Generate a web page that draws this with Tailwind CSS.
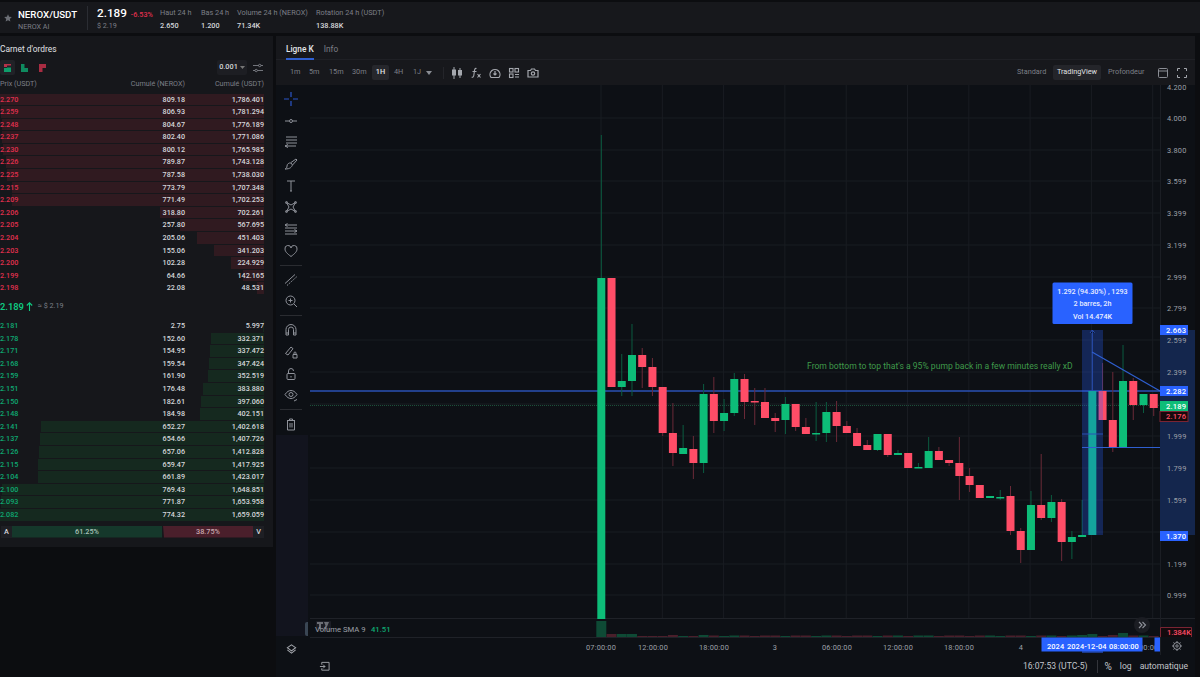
<!DOCTYPE html>
<html lang="fr">
<head>
    <meta charset="UTF-8">
    <title>NEROX/USDT</title>
    <script src="https://cdn.jsdelivr.net/npm/@tailwindcss/browser@4"></script>
</head>
<body class="bg-[#0c0d10] font-['Roboto',sans-serif] text-[#d5d7db] w-[1200px] h-[677px] overflow-hidden">

    <!-- en-tete -->
    <header class="mt-[2px] h-[31px] bg-[#17181c] flex items-center">
        <svg class="ml-[4px] w-[8px] h-[8px] mt-[1px]" viewBox="0 0 24 24" fill="#6b6e75"><path d="M12 1l3.4 7.4 8 .9-6 5.4 1.700 8L12 18.700l-7.100 4 1.700-8-6-5.400 8-.9z"/></svg>
        <div class="ml-[6px] w-[69px] mt-[4px]">
            <div class="text-[9.700px] leading-[13px] font-medium text-white">NEROX/USDT</div>
            <div class="text-[7.200px] leading-[11px] text-[#7c7f87]">NEROX AI</div>
        </div>
        <div class="w-px h-[24px] bg-[#2b2d33]"></div>
        <div class="ml-[9px] w-[63px] mt-[1.500px]">
            <div class="flex items-baseline gap-[4px]">
                <span class="text-[11.700px] leading-[15px] font-medium text-white">2.189</span>
                <span class="text-[7.200px] font-medium text-[#e0304e]">-6.53%</span>
            </div>
            <div class="text-[7.200px] leading-[10px] text-[#7c7f87]">$ 2.19</div>
        </div>
        <div class="w-[41px] mt-[2px]"><div class="text-[7.300px] leading-[13px] text-[#7c7f87]">Haut 24 h</div><div class="text-[7.300px] leading-[13px] font-medium text-[#d5d7db]">2.650</div></div>
        <div class="w-[36px] mt-[2px]"><div class="text-[7.300px] leading-[13px] text-[#7c7f87]">Bas 24 h</div><div class="text-[7.300px] leading-[13px] font-medium text-[#d5d7db]">1.200</div></div>
        <div class="w-[79px] mt-[2px]"><div class="text-[7.300px] leading-[13px] text-[#7c7f87]">Volume 24 h (NEROX)</div><div class="text-[7.300px] leading-[13px] font-medium text-[#d5d7db]">71.34K</div></div>
        <div class="mt-[2px]"><div class="text-[7.300px] leading-[13px] text-[#7c7f87]">Rotation 24 h (USDT)</div><div class="text-[7.300px] leading-[13px] font-medium text-[#d5d7db]">138.88K</div></div>
    </header>

    <div class="mt-[3px] flex h-[641px]">
        <!-- carnet d'ordres -->
        <aside class="w-[273px] h-[511px] bg-[#16171b] shrink-0">
            <div class="h-[24px] pt-[7px] text-[8.400px] leading-[13px] text-[#e0e2e5]">Carnet d'ordres</div>
            <div class="h-[15px] flex items-center">
                <div class="w-[15px] h-[15px] rounded-[2px] bg-[#212227] flex items-center justify-center">
                    <svg class="w-[7px] h-[8px]" viewBox="0 0 7 8"><path fill="#b8324a" d="M0 0h7v1.500H3v1.500H0z"/><path fill="#0f9d6b" d="M0 4h3v-.500h4V8H0z"/></svg>
                </div>
                <svg class="ml-[6px] w-[7px] h-[8px]" viewBox="0 0 7 8"><path fill="#0f8a5f" d="M0 0h3.500v4H7v4H0z"/></svg>
                <svg class="ml-[11px] w-[7px] h-[8px]" viewBox="0 0 7 8"><path fill="#a82c42" d="M0 0h7v4H3.500v4H0z"/></svg>
                <div class="ml-[171px] w-[30px] h-[15px] rounded-[2px] bg-[#1d1e23] flex items-center justify-center gap-[2px] text-[7.300px] font-medium text-[#d5d7db]">0.001<svg class="w-[5px] h-[3px]" viewBox="0 0 5 3" fill="#777"><path d="M0 0h5L2.500 3z"/></svg></div>
                <svg class="ml-[6px] w-[10px] h-[10px]" viewBox="0 0 10 10" fill="none" stroke="#8a8d94" stroke-width=".8"><path d="M0 2.500h5.500M8 2.500h2M0 7.500h2M4.500 7.500H10"/><circle cx="6.700" cy="2.500" r="1.200"/><circle cx="3.200" cy="7.500" r="1.200"/></svg>
            </div>
            <div class="h-[18.500px] w-[264px] grid grid-cols-[1fr_53px_79px] items-center text-[7.200px] text-[#7c7f87]">
                <span>Prix (USDT)</span>
                <span class="text-right whitespace-nowrap justify-self-end">Cumulé (NEROX)</span>
                <span class="text-right">Cumulé (USDT)</span>
            </div>
            <div id="asks" class="w-[264px]"></div>
            <div class="h-[25px] pb-[2px] flex items-center">
                <span class="text-[9.300px] font-semibold text-[#0ecb81]">2.189</span>
                <svg class="ml-[2px] w-[7px] h-[9px]" viewBox="0 0 7 9" fill="none" stroke="#0ecb81" stroke-width="1.100"><path d="M3.500 9V1M.8 3.500L3.500 .8l2.700 2.700"/></svg>
                <span class="ml-[5px] text-[7.200px] text-[#7c7f87]">≈ $ 2.19</span>
            </div>
            <div id="bids" class="w-[264px]"></div>
            <!-- barre A / V -->
            <div class="w-[264px] mt-[4px] pl-[1px] h-[12px] flex items-stretch text-[7.300px] leading-[12px] text-center font-medium">
                <div class="w-[11px] bg-[#1e1f24] text-[#d5d7db]">A</div>
                <div class="w-[150px] bg-[#15382b] text-[#a9c3b8] [clip-path:polygon(0_0,100%_0,101%_100%,0_100%)]">61.25%</div>
                <div class="ml-[1px] flex-1 bg-[#4a1f2b] text-[#c7a7ae] [clip-path:polygon(0_0,100%_0,100%_100%,1px_100%)]">38.75%</div>
                <div class="w-[11px] bg-[#1e1f24] text-[#d5d7db]">V</div>
            </div>
        </aside>

        <!-- graphique -->
        <main class="ml-[3px] w-[919px] h-[641px] flex flex-col bg-[#0d1015]">
            <div class="h-[24px] bg-[#17181c] flex items-start gap-[10px] pl-[10px] border-b border-[#1f2025]">
                <div class="h-[24px] pt-[7px] text-[8.300px] leading-[12px] font-medium text-[#e3e5e8] border-b-2 border-[#2f5fd0]">Ligne K</div>
                <div class="pt-[7px] text-[8.300px] leading-[12px] text-[#7c7f87]">Info</div>
            </div>
            <div class="h-[25px] bg-[#17181c] flex items-center pl-[14px] text-[7.300px] text-[#7c7f87]">
                <span class="w-[19px]">1m</span><span class="w-[20px]">5m</span><span class="w-[23px]">15m</span><span class="w-[20px]">30m</span>
                <span class="w-[17px] h-[15px] rounded-[2px] bg-[#26272c] text-[#e3e5e8] font-medium flex items-center justify-center">1H</span>
                <span class="ml-[5px] w-[19px]">4H</span><span class="w-[12px]">1J</span>
                <svg class="ml-[1px] w-[6px] h-[4px]" viewBox="0 0 6 4" fill="#8a8d94"><path d="M0 0h6L3 4z"/></svg>
                <div class="ml-[11px] w-px h-[12px] bg-[#24252a]"></div>
                <div class="ml-[7px] flex items-center gap-[7px]">
                    <svg class="w-[12px] h-[12px]" viewBox="0 0 12 12" fill="#a4a7ad"><path d="M2.500 0h1v2.500H5v6H3.500V12h-1V8.500H1v-6h1.500zM8.500 1h1v2H11v5.500H9.500V11h-1V8.500H7V3h1.500z"/></svg>
                    <svg class="w-[12px] h-[12px]" viewBox="0 0 12 12" fill="none" stroke="#a4a7ad" stroke-width="1.100"><path d="M6.500 1.500C4.500 1 4.500 3 4.300 5L3.700 9c-.2 1-1 1.500-2 1M2.500 4.500h4M7.500 7l3 3.500M10.500 7l-3 3.500"/></svg>
                    <svg class="w-[12px] h-[12px]" viewBox="0 0 12 12" fill="none" stroke="#a4a7ad" stroke-width="1.200"><path d="M2 10.500A5 5 0 1 1 10 10.500z"/><path d="M6 4v3.500M4.500 6.500L6 8l1.500-1.500"/></svg>
                    <svg class="w-[12px] h-[12px]" viewBox="0 0 12 12" fill="none" stroke="#a4a7ad" stroke-width="1.100"><rect x="1.500" y="1.500" width="3.500" height="3.500"/><rect x="1.500" y="7" width="3.500" height="3.500"/><rect x="7" y="1.500" width="3.500" height="3.500"/><path d="M7 7.500h4M7 10h4"/></svg>
                    <svg class="w-[12px] h-[12px]" viewBox="0 0 12 12" fill="none" stroke="#a4a7ad" stroke-width="1.200"><path d="M1 3.500h2.500L4.500 2h3l1 1.500H11V10H1z"/><circle cx="6" cy="6.500" r="1.700"/></svg>
                </div>
                <div class="ml-auto flex items-center">
                    <span class="w-[36px]">Standard</span>
                    <span class="w-[48px] h-[15px] rounded-[2px] bg-[#24252a] text-[#e0e2e5] flex items-center justify-center">TradingView</span>
                    <span class="ml-[7px] w-[47px]">Profondeur</span>
                    <svg class="ml-[3px] w-[10px] h-[10px]" viewBox="0 0 10 10" fill="none" stroke="#8a8d94"><rect x=".5" y=".5" width="9" height="9" rx="1"/><path d="M.5 3h9"/></svg>
                    <svg class="ml-[9px] mr-[8px] w-[10px] h-[10px]" viewBox="0 0 10 10" fill="none" stroke="#a4a7ad"><path d="M.5 3V.5H3M7 .5h2.500V3M9.500 7v2.500H7M3 9.500H.5V7"/></svg>
                </div>
            </div>
            <div class="flex h-[570px]">
                <!-- outils de dessin -->
                <div class="w-[30px] shrink-0 flex flex-col">
                    <div id="tools" class="pt-[3px] flex flex-col items-center h-[353px]"></div>
                    <div class="w-[32px] h-[202px] bg-[#12141e] relative z-10">
                        <div class="absolute right-0 bottom-0 w-[3px] h-[14px] rounded-l-[2px] bg-[#3a4654]"></div>
                    </div>
                    <div class="flex justify-center pt-[8px]">
                        <svg class="w-[11px] h-[11px]" viewBox="0 0 12 12" fill="none" stroke="#a4a7ad" stroke-width="1.100"><path d="M6 1l4.500 3L6 7.500 1.500 4z"/><path d="M1.500 6.500L6 10l4.500-3.500"/></svg>
                    </div>
                </div>
                <svg id="chart" class="w-[889px] h-[570px]" viewBox="306 85 889 570"></svg>
            </div>
            <div class="h-[22px] flex items-center text-[8.600px] text-[#c2c5cb]">
                <svg class="ml-[43px] w-[11px] h-[11px]" viewBox="0 0 12 12" fill="none" stroke="#a4a7ad"><path d="M3 4V1.500h8V10H3V8M1 6h5.500M4.500 4l2 2-2 2"/></svg>
                <span class="ml-auto">16:07:53 (UTC-5)</span>
                <div class="ml-[9px] w-px h-[13px] bg-[#33353b]"></div>
                <span class="ml-[7px] text-[10px]">%</span>
                <span class="ml-[8px]">log</span>
                <span class="ml-[8px] mr-[7px]">automatique</span>
            </div>
        </main>
    </div>

    <script>
        // --- carnet d'ordres ---
        const ASKS = [
            ['2.270','809.18','1,786.401'],['2.259','806.93','1,781.294'],['2.248','804.67','1,776.189'],['2.237','802.40','1,771.086'],
            ['2.230','800.12','1,765.985'],['2.226','789.87','1,743.128'],['2.225','787.58','1,738.030'],['2.215','773.79','1,707.348'],
            ['2.209','771.49','1,702.253'],['2.206','318.80','702.261'],['2.205','257.80','567.695'],['2.204','205.06','451.403'],
            ['2.203','155.06','341.203'],['2.200','102.28','224.929'],['2.199','64.66','142.165'],['2.198','22.08','48.531']
        ];
        const BIDS = [
            ['2.181','2.75','5.997'],['2.178','152.60','332.371'],['2.171','154.95','337.472'],['2.168','159.54','347.424'],
            ['2.159','161.90','352.519'],['2.151','176.48','383.880'],['2.150','182.61','397.060'],['2.148','184.98','402.151'],
            ['2.141','652.27','1,402.618'],['2.137','654.66','1,407.726'],['2.126','657.06','1,412.828'],['2.115','659.47','1,417.925'],
            ['2.104','661.89','1,423.017'],['2.100','769.43','1,648.851'],['2.093','771.87','1,653.958'],['2.082','774.32','1,659.059']
        ];

        function renderBook(el, rows, max, barClass, textClass) {
            el.innerHTML = rows.map(r => {
                const pct = parseFloat(r[2].replace(',', '')) / max * 100;
                return `<div class="relative h-[12.600px] text-[7.200px] leading-[12px] font-medium flex text-[#d5d7db]">
                    <div class="absolute right-0 top-0 h-[11.600px] ${barClass}" style="width:${pct}%"></div>
                    <span class="relative w-[132px] ${textClass}">${r[0]}</span>
                    <span class="relative w-[53px] text-right">${r[1]}</span>
                    <span class="relative w-[79px] text-right">${r[2]}</span>
                </div>`;
            }).join('');
        }
        renderBook(document.getElementById('asks'), ASKS, 1786.401, 'bg-[#301a20]', 'text-[#e0304e]');
        renderBook(document.getElementById('bids'), BIDS, 1659.059, 'bg-[#15291f]', 'text-[#0fa872]');

        // --- outils de dessin ---
        const TOOL = 'fill="none" stroke="#8f929a" stroke-width="1"';
        const TOOLS = [
            `<path fill="none" stroke="#2a55c8" stroke-width="1.200" d="M7 0v5M7 9v5M0 7h5M9 7h5"/>`,
            `<g ${TOOL}><path d="M1 7h4M9 7h4"/><circle cx="7" cy="7" r="1.500"/></g>`,
            `<g ${TOOL}><path d="M2 2h11M2 5h11M2 8h11M1 11h11M4 9.500L1 11l3 1.500"/></g>`,
            `<g ${TOOL}><path d="M1 12c1-.5 2-1 2-3s2-3.500 4-3l1.500 2c-1 2-2 4-7.500 4zM7 5.500L12 2l1 1-4.500 5"/></g>`,
            `<g ${TOOL}><path d="M3 2h8M7 2v10M6 12h2"/></g>`,
            `<g ${TOOL}><path d="M2.500 2.500l2.500 4.500-2.500 4.500 4.500-2.500 4.500 2.500L9 7l2.500-4.500L7 5z"/><circle cx="2.500" cy="2.500" r="1"/><circle cx="11.500" cy="2.500" r="1"/><circle cx="2.500" cy="11.500" r="1"/><circle cx="11.500" cy="11.500" r="1"/></g>`,
            `<g ${TOOL}><path d="M1 3h12M1 6h12M1 9h12M1 12h12M3.500 1.500L1 3l2.500 1.500M10.500 7.500L13 9l-2.500 1.500"/></g>`,
            `<g ${TOOL}><path d="M7 12.500C3 9.500 1 7.500 1 5a3 3 0 0 1 6-1 3 3 0 0 1 6 1c0 2.500-2 4.500-6 7.500z"/></g>`,
            `sep`,
            `<g ${TOOL}><path d="M1 10.500L11 1.500"/><path stroke-dasharray="1.500 1" d="M3 12.500L13 3.500"/></g>`,
            `<g ${TOOL}><circle cx="6.500" cy="6.500" r="4.500"/><path d="M10 10l3 3M6.500 4.500v4M4.500 6.500h4"/></g>`,
            `sep`,
            `<g ${TOOL}><path d="M2 12V6.500a5 5 0 0 1 10 0V12H9.500V6.500a2.500 2.500 0 0 0-5 0V12zM2 10h2.500M9.500 10H12"/></g>`,
            `<g ${TOOL}><path d="M1.500 8.500L7 2l2 1.700L4 10zM9 9.500h4v3.500H9zM10 9.500V8a1 1 0 0 1 2 0v1.500"/></g>`,
            `<g ${TOOL}><rect x="3" y="6.500" width="8" height="6" rx="1"/><path d="M4.500 6.500V4a2.500 2.500 0 0 1 5 0M7 9v1.500"/></g>`,
            `<g ${TOOL}><path d="M1 6.500C3 3.500 5 2.500 7 2.500s4 1 6 4c-2 3-4 4-6 4s-4-1-6-4z"/><circle cx="7" cy="6.500" r="2"/><path d="M10 13l3-1.500"/></g>`,
            `sep`,
            `<g ${TOOL}><path d="M3 3.500h8M5.500 3.500V2h3v1.500M3.500 3.500V13h7V3.500M6 6v4.500M8 6v4.500"/></g>`
        ];
        document.getElementById('tools').innerHTML = TOOLS.map(t => t === 'sep'
            ? '<div class="w-[22px] h-[7.300px] shrink-0 flex items-center"><div class="w-full h-px bg-[#2a2c31]"></div></div>'
            : `<div class="h-[21.700px] flex items-center justify-center shrink-0"><svg class="w-[14px] h-[14px]" viewBox="0 0 14 14">${t}</svg></div>`
        ).join('');

        // --- bougies : couleur, haut corps, bas corps, haut meche, bas meche ---
        const C = [
            'g278 619 135 619','r278 387 278 387','g381 387 354 396','g355 381 324 396','r355 367 348 388','r367 387 358 396','r387 433 387 436','r433 453 403 466',
            'g448 454 425 454','r449 463 436 479','g394 463 384 473','r394 421 377 433','g413 421 399 431','g379 413 373 416','r379 402 374 419','r401 402 388 425',
            'r402 418 388 418','r418 421 413 432','g404 420 397 434','r404 427 404 431','r427 434 418 434','g433 434 402 441','g412 433 402 442','r412 426 401 442',
            'r426 433 421 433','r433 446 428 446','r445 450 440 450','g434 450 434 451','r434 455 434 457','g453 455 450 455','r453 468 453 468','g467 468 463 468',
            'g451 468 437 468','r451 460 447 460','r460 463 460 466','r463 476 437 500','r476 485 468 492','r485 498 485 498','g496 498 496 498','g497 498 490 500',
            'r496 531 486 535','r531 550 528 563','g505 550 491 550','r505 518 454 520','g502 518 495 522','r502 542 499 561','g537 542 531 559','g535 537 500 537',
            'g391 535 391 535','r391 420 363 420','r420 447 372 452','g381 447 345 447','r381 405 378 420','g394 405 394 413','r394 408 394 416'
        ];
        const VOL = {0:16, 1:3, 2:3, 3:3, 4:1, 5:1, 6:1, 7:2, 8:1, 9:1, 10:2, 47:2, 48:3, 51:4, 49:1, 50:2};
        const GREEN = '#0dbd78', RED = '#ff4d67';
        const FONT = 'font-family="Roboto, sans-serif"';
        const AXIS = `fill="#9da0a8" font-size="7.400" letter-spacing=".2" ${FONT}`;
        let s = '';

        // grille
        for (const y of [118,150,181,213,245,277,308,340,372,404,436,468,500,532,564,595]) s += `<path d="M310 ${y}H1160" stroke="#191c22"/>`;
        for (let x = 601; x < 1160; x += 61.3) s += `<path d="M${x} 85V618" stroke="#191c22"/>`;
        s += `<path d="M310 618.500H1195M310 637.500H1160" stroke="#1f2228"/><path d="M1160.500 85V655" stroke="#1b1e24"/>`;

        // lignes de prix
        s += `<path d="M310 405.500H1160" stroke="#1c4f3a" stroke-dasharray="1 1"/>`;
        s += `<path d="M310 391H1160" stroke="#2a50b5" stroke-width="1.600"/>`;

        // bougies
        C.forEach((c, i) => {
            const x = 601.3 + i * 10.23;
            const up = c[0] === 'g';
            const [t, b, wt, wb] = c.slice(1).split(' ').map(Number);
            s += `<path d="M${x} ${wt}V${wb}" stroke="${up ? '#0b5c40' : '#6b2a38'}"/>`;
            s += `<rect x="${x - 4}" y="${t}" width="8" height="${Math.max(b - t, 1.5)}" fill="${up ? GREEN : RED}"/>`;
            const h = VOL[i] || (i % 3 === 0 ? 1 : 1.5);
            s += `<rect x="${x - 5}" y="${637 - h}" width="10" height="${h}" fill="${up ? '#0e4a35' : '#4a1f2b'}"/>`;
        });

        // mesure de prix
        s += `<rect x="1082" y="330" width="21" height="205" fill="#2962ff" fill-opacity=".28"/>`;
        s += `<path d="M1092.300 330V391M1090 333l2.300-3 2.300 3M1082 434h21" stroke="#2a50b5"/>`;
        s += `<path d="M1082 447.500H1160" stroke="#2f5fd0"/><path d="M1092 352L1160 391" stroke="#2f5fd0" stroke-width="1.200"/>`;
        s += `<rect x="1160" y="330" width="35" height="205" fill="#14264d"/>`;
        s += `<rect x="1052.500" y="282.500" width="80" height="41.500" rx="1.500" fill="#2962ff"/>`;
        [['1.292 (94.30%) , 1293',293.500],['2 barres, 2h',306],['Vol 14.474K',318.500]].forEach(t => {
            s += `<text x="1092.500" y="${t[1]}" text-anchor="middle" fill="#e8edff" font-size="7.200" font-weight="500" ${FONT}>${t[0]}</text>`;
        });
        s += `<text x="807" y="369" fill="#3f9a4a" font-size="8.600" ${FONT}>From bottom to top that's a 95% pump back in a few minutes really xD</text>`;

        // echelle de prix
        for (const [p, y] of [['4.200',90],['4.000',121],['3.800',153],['3.599',184],['3.399',216],['3.199',248],['2.999',280],['2.799',311],['2.599',343],['2.399',375],['1.999',439],['1.799',471],['1.599',503],['1.199',567],['0.999',598]]) {
            s += `<text x="1167" y="${y}" ${AXIS}>${p}</text>`;
        }
        for (const [p, y, bg, fg, bd] of [['2.663',325,'#2962ff','#fff',''],['2.282',386,'#2962ff','#fff',''],['2.189',401,'#0dbd78','#fff',''],['2.176',411.5,'#16090c','#ff4d67','#7a2433'],['1.370',531,'#2962ff','#fff','']]) {
            s += `<rect x="1160" y="${y}" width="28" height="10" fill="${bg}" ${bd ? `stroke="${bd}"` : ''}/>`;
            s += `<text x="1166" y="${y + 7.800}" fill="${fg}" font-size="7.600" font-weight="500" letter-spacing=".2" ${FONT}>${p}</text>`;
        }
        s += `<path d="M1160.500 637V627.500H1191.500V637" fill="#140a0d" stroke="#7a2433"/><text x="1167" y="635" fill="#ff4d67" font-size="7.500" font-weight="500" ${FONT}>1.384K</text>`;

        // volume
        s += `<rect x="316" y="621" width="15" height="10" rx="1" fill="#1c1e26"/><path d="M317 622h6v2h-2v5h-2v-5h-2zM324 622h5l-3 7h-2l1.500-3.500" fill="#6b6e75"/>`;
        s += `<text x="315" y="632" fill="#9da0a8" font-size="7.700" ${FONT}>Volume SMA 9</text><text x="371" y="632" fill="#0fa872" font-size="7.700" font-weight="500" ${FONT}>41.51</text>`;
        s += `<circle cx="1142" cy="625" r="8" fill="#1b1d23"/><path d="M1139 622l3 3-3 3M1142.500 622l3 3-3 3" fill="none" stroke="#8f929a" stroke-width="1.100"/>`;

        // echelle de temps
        for (const [t, x] of [['07:00:00',601],['12:00:00',653],['18:00:00',714],['3',775],['06:00:00',837],['12:00:00',898],['18:00:00',959],['4',1021]]) {
            s += `<text x="${x}" y="650" text-anchor="middle" ${AXIS}>${t}</text>`;
        }
        s += `<text x="1139" y="650" ${AXIS}>00:00</text>`;
        s += `<rect x="1082" y="651" width="21" height="2" fill="#1d3a8a"/><rect x="1041.500" y="637.500" width="101" height="14" fill="#2962ff"/><rect x="1154.500" y="637.500" width="5.500" height="14" fill="#2962ff"/>`;
        [['2024',1047],['2024-12-04',1067],['08:00:00',1109]].forEach(t => {
            s += `<text x="${t[1]}" y="649" fill="#fff" font-size="7.400" font-weight="500" letter-spacing=".1" ${FONT}>${t[0]}</text>`;
        });
        s += `<g transform="translate(1177 646)" fill="none" stroke="#8f929a"><circle r="3.500"/><circle r="1.200"/><path d="M0-5v1.500M0 3.500V5M-5 0h1.500M3.500 0H5M-3.500-3.500l1 1M2.500 2.500l1 1M-3.500 3.500l1-1M2.500-2.500l1-1"/></g>`;
        document.getElementById('chart').innerHTML = s;
    </script>
</body>
</html>
